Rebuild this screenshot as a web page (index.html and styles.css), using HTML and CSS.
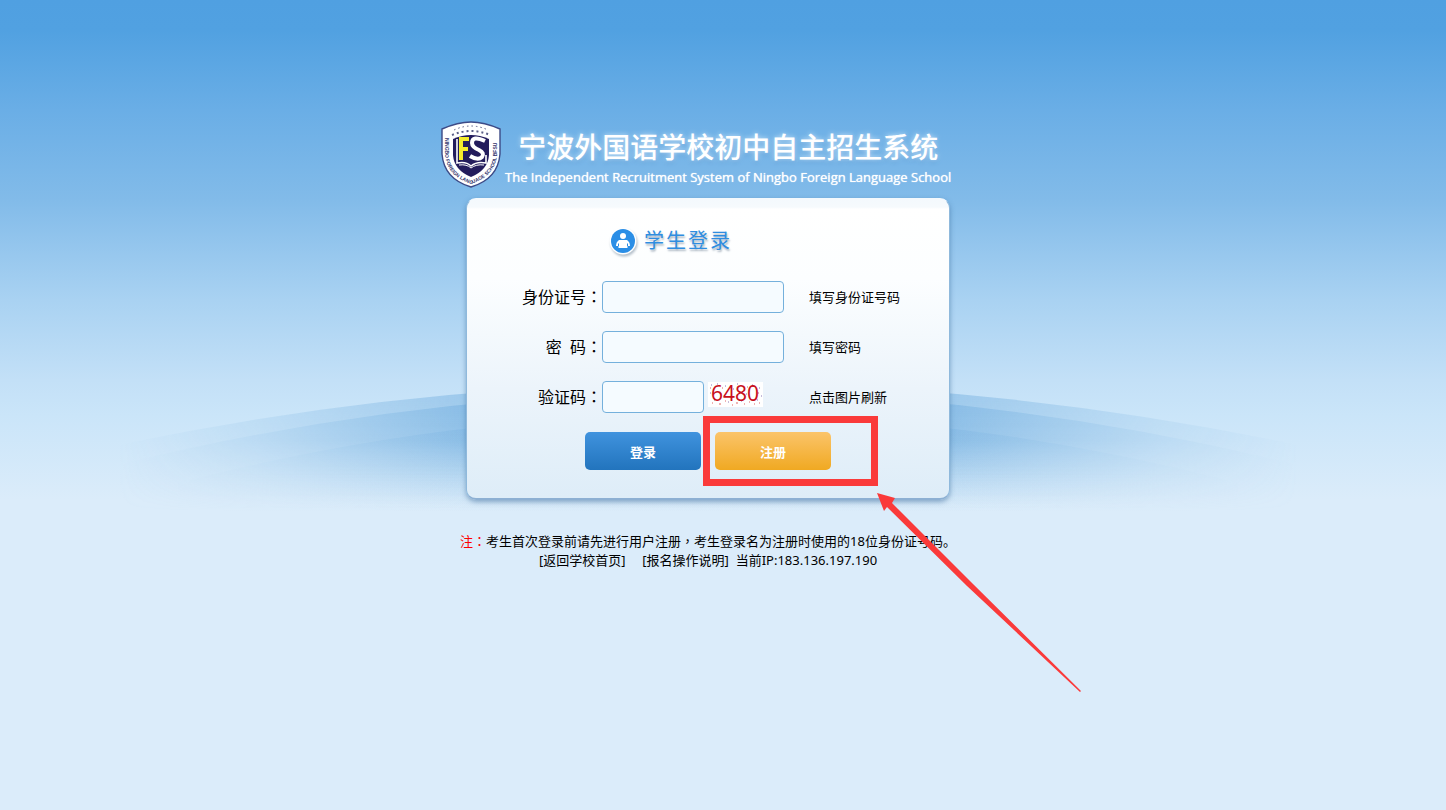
FILE: index.html
```
<!DOCTYPE html>
<html lang="zh-CN">
<head>
  <meta charset="UTF-8">
  <title>宁波外国语学校初中自主招生系统</title>
  <meta name="viewport" content="width=device-width, initial-scale=1.0">
  <link rel="stylesheet" href="styles.css">
</head>
<body>
  <main class="page">
    <!-- hills behind the login box -->
    <svg class="hills" viewBox="0 0 1180 130" aria-hidden="true">
      <defs>
        <linearGradient id="side" x1="0" x2="1" y1="0" y2="0">
          <stop offset="0" stop-color="#000"/>
          <stop offset="0.12" stop-color="#555"/>
          <stop offset="0.3" stop-color="#fff"/>
          <stop offset="0.7" stop-color="#fff"/>
          <stop offset="0.88" stop-color="#555"/>
          <stop offset="1" stop-color="#000"/>
        </linearGradient>
        <mask id="fade"><rect width="1180" height="130" fill="url(#side)"/></mask>
        <linearGradient id="hill" gradientUnits="userSpaceOnUse" x1="0" x2="0" y1="0" y2="128">
          <stop offset="0.1" stop-color="#6aa9dc"/>
          <stop offset="0.45" stop-color="#6aa9dc" stop-opacity="0.8"/>
          <stop offset="1" stop-color="#9cc8ea" stop-opacity="0"/>
        </linearGradient>
      </defs>
      <g mask="url(#fade)" fill="url(#hill)">
        <path opacity="0.45" d="M0 62Q590 -62 1180 62V130H0Z"/>
        <path opacity="0.45" d="M0 82Q590 -64 1180 82V130H0Z"/>
        <path opacity="0.28" d="M60 100Q590 -38 1120 100V130H60Z"/>
      </g>
    </svg>

    <header class="header">
      <svg class="logo" viewBox="0 0 60 67" role="img" aria-label="Ningbo Foreign Language School">
        <path d="M30 1Q17 1 1 8V33Q3 58 30 66Q57 58 59 33V8Q43 1 30 1Z" fill="#fff" stroke="#3c4a86" stroke-width="1.4"/>
        <path d="M30 14Q21 14 12 18V34Q13 49 30 56Q47 49 48 34V18Q39 14 30 14Z" fill="#231c5c"/>
        <g fill="none" stroke="#5c6088">
          <path d="M13 9Q30 1 47 9" stroke-width="1" stroke-dasharray="1.5 3"/>
          <path d="M11 14Q30 6 49 14" stroke-width="2" stroke-dasharray="2 3"/>
        </g>
        <path id="ring" d="M4 17V34Q6 55 30 63Q54 55 56 34V15" fill="none"/>
        <text class="logo-ring"><textPath href="#ring">NINGBO FOREIGN LANGUAGE SCHOOL BFSU</textPath></text>
        <path d="M18 16H28V20H22V26H27V30H22V39H18Z" fill="#f4ec2c"/>
        <path d="M44 20Q31 14 31 22Q31 26 38 29Q44 32 41 36Q37 40 29 35" fill="none" stroke="#fff" stroke-width="4"/>
        <path d="M16 18V42Q25 40 30 45Q36 40 45 42V34" fill="none" stroke="#fff" stroke-width="1.6"/>
        <path d="M18 44Q26 43 30 47Q35 43 43 44" fill="none" stroke="#fff" stroke-width="1"/>
      </svg>
      <div class="title-text">
        <h1>宁波外国语学校初中自主招生系统</h1>
        <p>The Independent Recruitment System of Ningbo Foreign Language School</p>
      </div>
    </header>

    <form class="panel" id="login-form">
      <h2 class="panel-title">
        <svg class="user-icon" viewBox="0 0 30 30" aria-hidden="true">
          <circle cx="15" cy="15" r="13.5" fill="#fff"/>
          <circle cx="15" cy="15" r="12" fill="#2b8ee6"/>
          <circle cx="15" cy="10" r="3" fill="#fff"/>
          <path d="M11 14H19Q22 16 22 20H19.500V22H10.500V20H8Q8 16 11 14Z" fill="#fff"/>
          <path d="M10.500 17.500V20M19.500 17.500V20" stroke="#2b8ee6"/>
        </svg>
        学生登录
      </h2>

      <div class="fields">
        <label for="idcard">身份证号<span class="mid" lang="zh-TW">：</span></label>
        <input type="text" id="idcard" name="idcard">
        <span class="hint">填写身份证号码</span>

        <label for="password">密&nbsp;&nbsp;码<span class="mid" lang="zh-TW">：</span></label>
        <input type="password" id="password" name="password">
        <span class="hint">填写密码</span>

        <label for="captcha">验证码<span class="mid" lang="zh-TW">：</span></label>
        <div class="captcha-row">
          <input type="text" id="captcha" name="captcha">
          <button type="button" class="captcha">
            <svg viewBox="0 0 55 25">
              <rect width="55" height="25" fill="#fff"/>
              <path d="M3 3h1M9 2h1M17 4h1M29 2h1M44 3h1M51 6h1M2 11h1M13 12h1M25 7h1M38 12h1M53 14h1M6 18h1M49 18h1M20 20h1M33 19h1" stroke="#8a78b8"/>
              <path d="M4 21h1M11 22h2M17 19h1M24 23h1M28 21h2M36 22h1M41 20h1M46 22h1M51 21h1M2 6h1M50 11h1M14 6h1M39 5h1" stroke="#d66"/>
              <text x="3" y="19">6480</text>
            </svg>
          </button>
        </div>
        <span class="hint">点击图片刷新</span>
      </div>

      <div class="buttons">
        <button type="submit" class="btn btn-login">登录</button>
        <button type="button" class="btn btn-register">注册</button>
      </div>

      <!-- red frame and arrow pointing at the register button -->
      <svg class="pointer" viewBox="0 0 380 278" aria-hidden="true">
        <rect x="3.500" y="3.500" width="168" height="63" fill="none" stroke="#fa3a3a" stroke-width="7"/>
        <path d="M174 77L192 82L189 87L270 168L378 275L377 276L264 170L184 91L181 95Z" fill="#fa3a3a"/>
      </svg>
    </form>

    <footer class="footer">
      <p><span class="red">注<span class="mid" lang="zh-TW">：</span></span>考生首次登录前请先进行用户注册<span class="mid" lang="zh-TW">，</span>考生登录名为注册时使用的18位身份证号码。</p>
      <p><a href="#">[返回学校首页]</a>&nbsp;&nbsp;&nbsp;&nbsp; <a href="#">[报名操作说明]</a>&nbsp; 当前IP:183.136.197.190</p>
    </footer>
  </main>
</body>
</html>
```
FILE: styles.css
```
* {
  margin: 0;
  padding: 0;
  box-sizing: border-box;
}
body {
  min-height: 100vh;
  padding: 121px 30px 0 0;
  background: #dbecfa linear-gradient(#50a0e1 0, #51a1e1 30px, #6aaee6 110px, #82bbe9 200px, #a9d2f2 300px, #c3e0f7 380px, #cae5f9 415px, #dbecfa 500px) no-repeat;
  font-family: "Noto Sans", "Noto Sans CJK SC", sans-serif;
  font-size: 13px;
  color: #000;
}
.page {
  position: relative;
  width: 484px;
  margin: 0 auto;
}
.hills {
  position: absolute;
  z-index: -1;
  top: 262px;
  left: 50%;
  width: 1180px;
  height: 130px;
  margin-left: -590px;
}
/* full-width punctuation centred in its box */
.mid {
  font-family: "Noto Sans CJK TC", sans-serif;
}

/* header */
.header {
  display: flex;
  gap: 4px;
  margin: 0 -4px 10px -25px;
}
.logo {
  flex: none;
  width: 60px;
  height: 67px;
}
.logo-ring {
  font-family: "Liberation Sans", sans-serif;
  font-size: 5px;
  font-weight: bold;
  fill: #34366e;
}
.title-text {
  color: #fff;
  text-align: center;
  white-space: nowrap;
}
.title-text h1 {
  padding-top: 6px;
  font-size: 28px;
  font-weight: 500;
  line-height: 40px;
  text-shadow: 0 0 5px #d8efff, 0 2px 4px #4a90d0;
}
.title-text p {
  font-family: "Open Sans", sans-serif;
  font-size: 13px;
  line-height: 20px;
  text-shadow: 0 0 1px #fff;
}

/* login box */
.panel {
  position: relative;
  padding: 28px 0;
  border: 1px solid #8fb9dc;
  border-top-color: #f4f9fd;
  border-bottom: 2px solid #8db0d3;
  border-radius: 10px;
  background: linear-gradient(#f4f9fd 0, #f6fafd 8px, #fff 10px, #fcfeff 80px, #ecf4fb 190px, #deedf8 100%);
  box-shadow: 0 2px 5px rgba(50, 100, 150, 0.5);
}
.panel-title {
  display: flex;
  align-items: center;
  gap: 6px;
  height: 28px;
  margin: 0 0 26px 141px;
  color: #2f8de0;
  font-size: 20px;
  font-weight: 400;
  line-height: 26px;
  letter-spacing: 2px;
  text-shadow: 1px 2px 2px #a9b4c0;
}
.user-icon {
  width: 30px;
  height: 30px;
  filter: drop-shadow(1px 2px 1px #b4bfca);
}
.fields {
  display: grid;
  grid-template-columns: 135px 182px 1fr;
  row-gap: 18px;
  align-items: center;
}
.fields label {
  padding-bottom: 2px;
  font-size: 16px;
  line-height: 24px;
  text-align: right;
}
.fields input {
  width: 100%;
  height: 32px;
  padding: 0 8px;
  border: 1px solid #74b0dc;
  border-radius: 4px;
  background: #f5fbff;
  font: inherit;
  outline: none;
}
.fields input:focus {
  border-color: #2b8ee6;
}
.hint {
  padding: 0 0 2px 25px;
}
.captcha-row {
  display: flex;
  gap: 4px;
}
.captcha-row input {
  width: 102px;
}
.captcha {
  width: 55px;
  height: 25px;
  margin-top: 1px;
  border: none;
  background: none;
  cursor: pointer;
}
.captcha svg {
  display: block;
  overflow: visible;
}
.captcha text {
  font-family: "Noto Sans", sans-serif;
  font-size: 21px;
  fill: #c8101c;
}
.buttons {
  display: flex;
  justify-content: center;
  gap: 14px;
  margin-top: 19px;
}
.btn {
  width: 116px;
  height: 38px;
  border: none;
  border-radius: 5px;
  color: #fff;
  font-family: inherit;
  font-size: 13px;
  font-weight: 700;
  cursor: pointer;
}
.btn-login {
  background: linear-gradient(#4093de, #2274bd);
}
.btn-register {
  background: linear-gradient(#fbc46a, #f0a922);
}
.pointer {
  position: absolute;
  z-index: 2;
  top: 217px;
  left: 236px;
  width: 380px;
  height: 278px;
  pointer-events: none;
}

/* notes under the box */
.footer {
  margin: 31px -20px 0;
  line-height: 19px;
  text-align: center;
}
.footer a {
  color: #000;
  text-decoration: none;
}
.footer a:hover {
  text-decoration: underline;
}
.red {
  color: #f00;
}
```
